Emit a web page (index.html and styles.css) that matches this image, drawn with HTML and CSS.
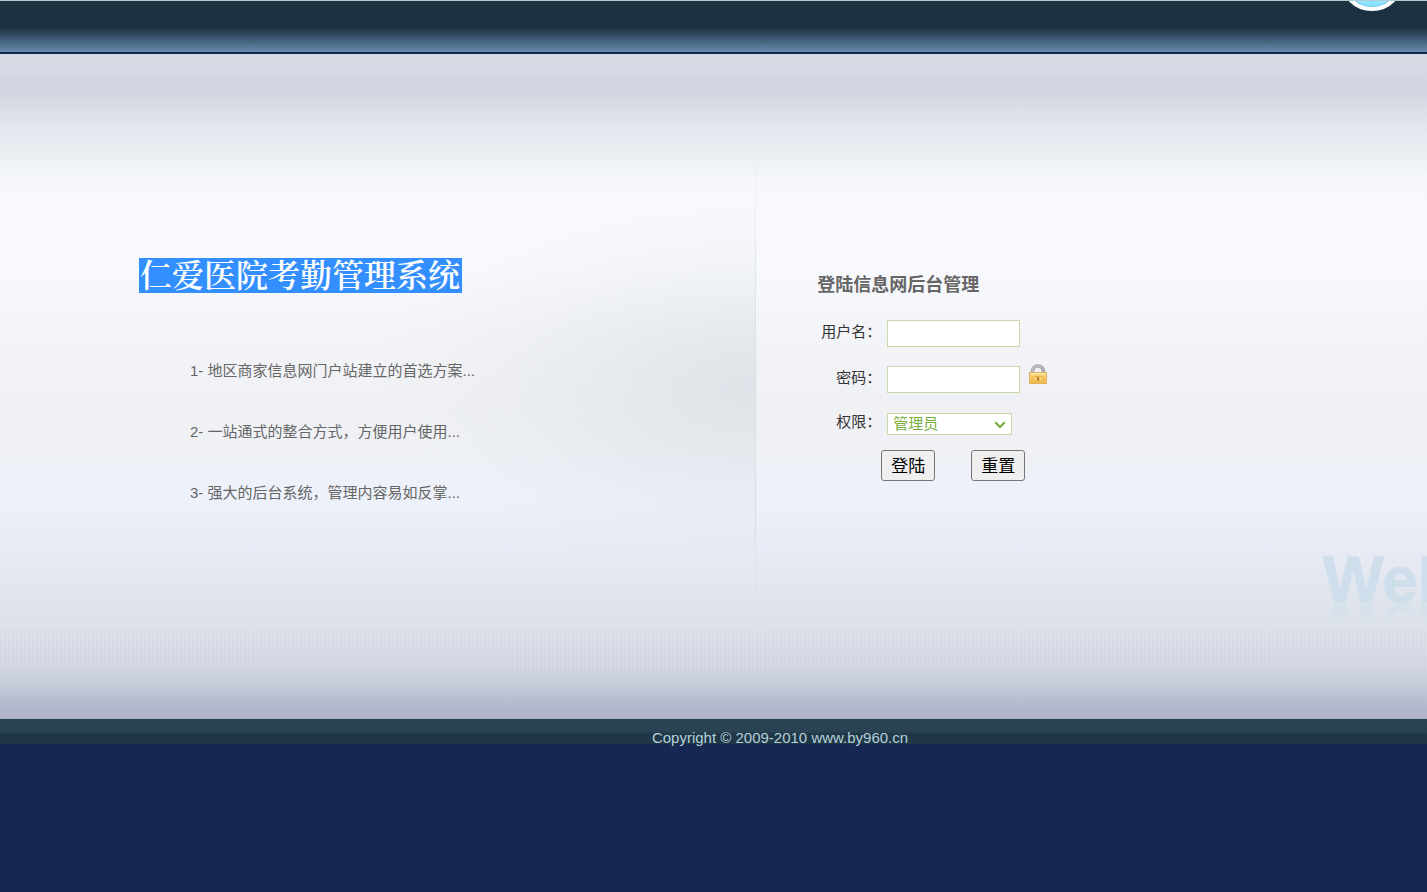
FILE: index.html
```html
<!DOCTYPE html>
<html lang="zh-CN">
<head>
<meta charset="utf-8">
<title>仁爱医院考勤管理系统</title>
<link rel="stylesheet" href="styles.css">
</head>
<body>
<header class="topbar"><span class="bubble"></span></header>
<main class="main">
  <section class="intro">
    <h1 class="title"><span class="selected">仁爱医院考勤管理系统</span></h1>
    <ul class="features">
      <li>1- 地区商家信息网门户站建立的首选方案...</li>
      <li>2- 一站通式的整合方式，方便用户使用...</li>
      <li>3- 强大的后台系统，管理内容易如反掌...</li>
    </ul>
  </section>
  <section class="login">
    <h2 class="login-title">登陆信息网后台管理</h2>
    <form class="form">
      <div class="row">
        <label class="label" for="user">用户名：</label>
        <input class="field" id="user" type="text">
      </div>
      <div class="row">
        <label class="label" for="pass">密码：</label>
        <input class="field" id="pass" type="password">
        <svg class="lock" viewBox="0 0 20 22" aria-hidden="true">
          <defs>
            <linearGradient id="gold" x1="0" y1="0" x2="0" y2="1">
              <stop offset="0" stop-color="#fbdc85"/>
              <stop offset="1" stop-color="#f1b849"/>
            </linearGradient>
          </defs>
          <path d="M4.5 12V8.5a5.5 5.5 0 0 1 11 0V12" fill="none" stroke="#a9abad" stroke-width="3.6"/>
          <path d="M4.2 11V8.5a5.8 5.8 0 0 1 9-4.6" fill="none" stroke="#cccdcf" stroke-width="1"/>
          <rect x="1.5" y="9.5" width="17" height="11" fill="url(#gold)" stroke="#e0b163"/>
          <path d="M2.5 10.7h15" stroke="#fff0b4"/>
          <path d="M5 13.5h10v4.5H5z" fill="none" stroke="#eeb64a"/>
          <path d="M7 14v3.5M13 14v3.5" stroke="#fbe08f"/>
          <path d="M10 14v3.5" stroke="#a9803a" stroke-width="2"/>
        </svg>
      </div>
      <div class="row row-role">
        <label class="label" for="role">权限：</label>
        <span class="select-wrap">
          <select class="select" id="role"><option>管理员</option></select>
          <svg class="chevron" viewBox="0 0 12 8" aria-hidden="true"><path d="M1.2 1.2 6 6l4.8-4.8" fill="none" stroke="#7aaf3c" stroke-width="2.2"/></svg>
        </span>
      </div>
      <div class="buttons">
        <button class="button" type="submit">登陆</button>
        <button class="button" type="reset">重置</button>
      </div>
    </form>
  </section>
  <div class="watermark" aria-hidden="true"><span class="watermark-text">Web</span></div>
</main>
<footer class="footer">Copyright © 2009-2010 www.by960.cn</footer>
</body>
</html>
```

FILE: styles.css
```css
* {
  box-sizing: border-box;
}

body {
  min-height: 100vh;
  margin: 0;
  background: #162852;
  color: #333;
  font: 15px/20px "Liberation Sans", "Noto Sans CJK SC", sans-serif;
}

.topbar {
  position: relative;
  height: 54px;
  overflow: hidden;
  border-top: 1px solid #b5ccd5;
  border-bottom: 2px solid #162652;
  background: linear-gradient(#1f323f, #1b3243 20%, #1d303d 52%, #2c4457 62%, #456580 80%, #6788ad);
}

.bubble {
  position: absolute;
  top: -54px;
  right: 23px;
  width: 64px;
  height: 64px;
  border: 4px solid #fff;
  border-radius: 50%;
  background: #8be3ff;
  box-shadow: inset 0 0 0 1px #78c4ea;
}

.main {
  position: relative;
  display: flex;
  min-height: 665px;
  overflow: hidden;
  background:
    repeating-linear-gradient(90deg, rgba(120, 130, 165, 0.04) 0 1px, transparent 1px 4px) top / 100% 56px no-repeat,
    repeating-linear-gradient(90deg, rgba(120, 130, 165, 0.05) 0 1px, transparent 1px 4px) bottom / 100% 90px no-repeat,
    linear-gradient(#d4daeb 0, #dadbe1 1%, #d7dce9 2%, #d2d6e3 4%, #d4d7e2 6%, #dce1e9 9%, #e3e8f1 12%, #ebeef2 15%, #f5f7fb 19%, #f8f9fd 23%, #f8f9fd 32%, #f3f4f7 42%, #f0f1f4 52%, #eff1f6 60%, #edf1fa 67%, #e8ebf5 74%, #dfe4ec 83%, #dadee8 89%, #d3d7e3 92%, #c5ced9 95%, #b8bfd0 97%, #adb2c8 100%);
}

.intro {
  flex: 0 0 53%;
  padding: 204px 0 0 139px;
  background:
    linear-gradient(transparent 10%, #d9dee6 45%, #d9dee6 70%, transparent 90%) right / 1px 100% no-repeat,
    radial-gradient(ellipse 380px 190px at 100% 50%, rgba(208, 216, 224, 0.55), rgba(213, 220, 226, 0.4) 35%, rgba(218, 224, 230, 0.16) 70%, transparent);
}

.title {
  margin: 0;
  font: 600 32px/37px "Liberation Serif", "Noto Serif CJK SC", "Noto Sans CJK SC", serif;
}

.selected {
  display: inline-block;
  height: 35px;
  padding: 0 2px 0 1px;
  background: #338fff;
  color: #fff;
}

.features {
  display: grid;
  gap: 41px;
  margin: 66px 0 0;
  padding: 0 0 0 51px;
  list-style: none;
  color: #666;
}

.login {
  flex: 1;
  padding: 219px 0 0 61px;
}

.login-title {
  margin: 0;
  color: #666;
  font-size: 18px;
  line-height: 24px;
}

.form {
  display: grid;
  margin-top: 23px;
}

.row {
  display: flex;
  gap: 6px;
  height: 46px;
}

.row-role {
  height: 38px;
}

.label {
  width: 64px;
  padding-top: 2px;
  text-align: right;
}

.field {
  width: 133px;
  height: 27px;
  padding: 2px 4px;
  border: 1px solid #cbd8ac;
  background: #fff;
  font: inherit;
}

.lock {
  width: 20px;
  height: 22px;
  margin-top: -3px;
  margin-left: 2px;
}

.select-wrap {
  position: relative;
  width: 125px;
  height: 22px;
  margin-top: 1px;
}

.row-role .label {
  padding-top: 0;
}

.select {
  width: 100%;
  height: 22px;
  padding: 0 20px 0 5px;
  border: 1px solid #cbd8ac;
  border-radius: 0;
  appearance: none;
  background: #fff;
  color: #7aaf3c;
  font: 15px/20px "Liberation Sans", "Noto Sans CJK SC", sans-serif;
}

.chevron {
  position: absolute;
  top: 8px;
  right: 6px;
  width: 12px;
  height: 8px;
  pointer-events: none;
}

.buttons {
  display: flex;
  gap: 36px;
  padding-left: 64px;
}

.button {
  width: 54px;
  height: 31px;
  padding: 2px 0 0;
  border: 1px solid #767676;
  border-radius: 3px;
  background: #efefef;
  color: #000;
  font: 17px/24px "Liberation Sans", "Noto Sans CJK SC", sans-serif;
}

.watermark {
  position: absolute;
  top: 502px;
  right: 0;
  width: 104px;
  height: 80px;
  overflow: hidden;
}

.watermark-text {
  display: block;
  width: 140px;
  height: 47px;
  color: #cfdeeb;
  font: 700 64px/48px "Liberation Sans", sans-serif;
  -webkit-text-stroke: 1px #cfdeeb;
  -webkit-box-reflect: below 0 linear-gradient(transparent 55%, rgba(0, 0, 0, 0.7));
}

.footer {
  height: 25px;
  padding: 9px 0 0 133px;
  background: linear-gradient(#284152, #2a4253 50%, #1f3746 60%, #1f3746);
  color: #b4d0dc;
  text-align: center;
}
```
